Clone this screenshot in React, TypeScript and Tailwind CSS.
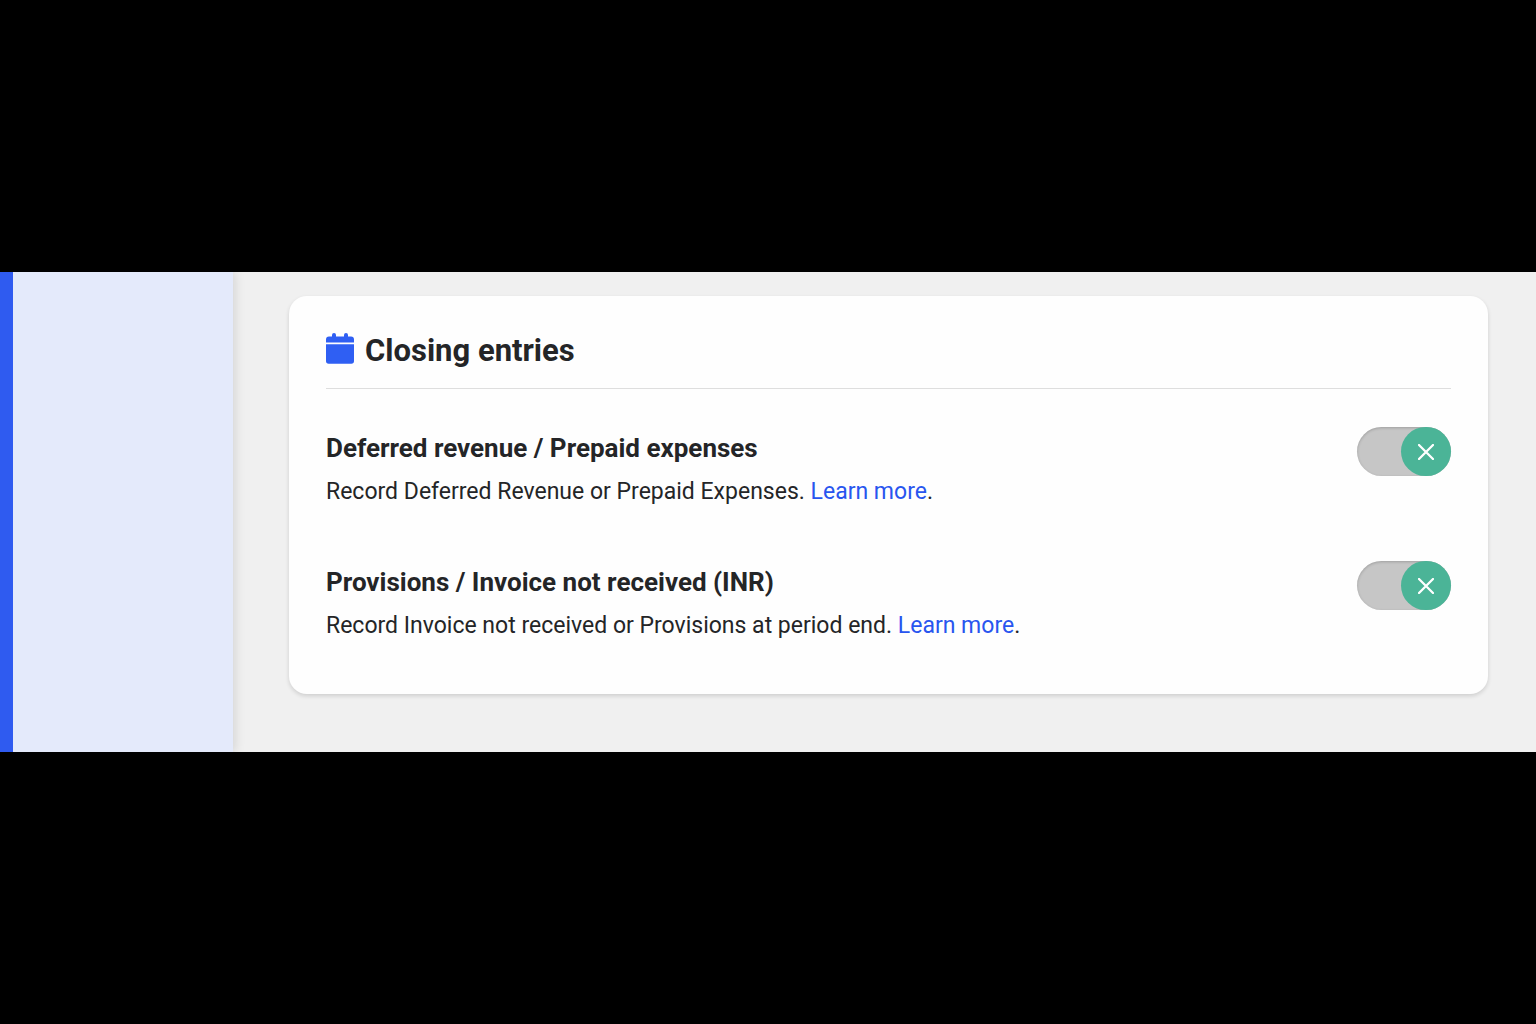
import { useState } from "react";

const entries = [
  {
    id: "deferred",
    title: "Deferred revenue / Prepaid expenses",
    description: "Record Deferred Revenue or Prepaid Expenses.",
  },
  {
    id: "provisions",
    title: "Provisions / Invoice not received (INR)",
    description: "Record Invoice not received or Provisions at period end.",
  },
];

const CalendarIcon = () => (
  <svg viewBox="0 0 28 31" className="h-[31px] w-7 shrink-0" fill="#2f5ff3" aria-hidden="true">
    <path d="M0 9.5V6.5a3 3 0 0 1 3-3h3V2a2 2 0 0 1 4 0v1.5h8V2a2 2 0 0 1 4 0v1.5h3a3 3 0 0 1 3 3v3z" />
    <path d="M0 11.3h28V28a2.7 2.7 0 0 1-2.7 2.7H2.7A2.7 2.7 0 0 1 0 28z" />
  </svg>
);

const Toggle = ({ labelledBy }: { labelledBy: string }) => {
  const [on, setOn] = useState(true);

  return (
    <button
      type="button"
      role="switch"
      aria-checked={on}
      aria-labelledby={labelledBy}
      onClick={() => setOn(!on)}
      className={`flex h-[49px] w-[94px] shrink-0 items-center rounded-full bg-[#c6c6c6] shadow-[inset_0_1px_3px_rgba(0,0,0,0.2)] ${
        on ? "justify-end" : "justify-start"
      }`}
    >
      <span className="flex h-[49px] w-[50px] items-center justify-center rounded-full bg-[#4bb497]">
        <svg viewBox="0 0 16 16" className="size-4" stroke="white" strokeWidth="2.3" strokeLinecap="round" aria-hidden="true">
          <path d="M1 1l14 14M15 1L1 15" />
        </svg>
      </span>
    </button>
  );
};

const App = () => (
  <div className="flex min-h-screen flex-col justify-center bg-black font-['Roboto',sans-serif] text-[#242527]">
    <div className="flex overflow-hidden bg-[#f0f0f0]">
      <aside className="w-[233px] shrink-0 border-l-[13px] border-[#2f5bf0] bg-[#e4eafb] shadow-[2px_0_10px_rgba(0,0,0,0.12)]" />
      <main className="min-w-0 flex-1 pt-6 pr-12 pb-[58px] pl-14">
        <section className="rounded-[18px] bg-[#fefefe] px-[37px] pt-[37px] pb-[45px] shadow-[0_2px_4px_rgba(0,0,0,0.14)]">
          <header className="flex items-start gap-[11px] border-b border-[#dedede] pb-[19px]">
            <CalendarIcon />
            <h2 className="text-[31px] leading-9 font-bold">Closing entries</h2>
          </header>
          <div className="flex flex-col gap-[46px] pt-[38px]">
            {entries.map((entry) => (
              <div key={entry.id} className="flex items-start justify-between gap-8">
                <div>
                  <h3 id={entry.id} className="text-[26px] leading-[42px] font-bold">
                    {entry.title}
                  </h3>
                  <p className="text-[23px] leading-[46px]">
                    {entry.description}{" "}
                    <a href="#" className="text-[#2855ef]">
                      Learn more
                    </a>
                    .
                  </p>
                </div>
                <Toggle labelledBy={entry.id} />
              </div>
            ))}
          </div>
        </section>
      </main>
    </div>
  </div>
);

export default App;
